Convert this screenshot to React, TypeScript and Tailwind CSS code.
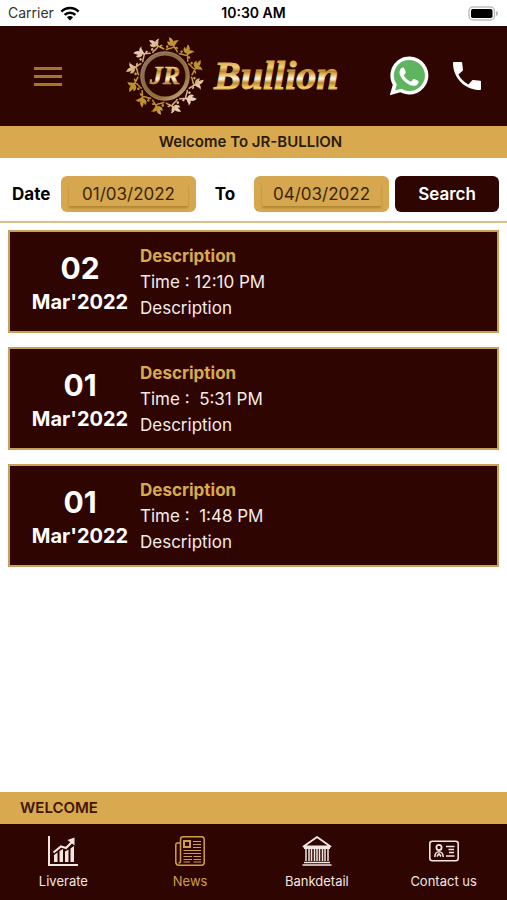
import { useState } from "react";

const NEWS = [
  { day: "02", month: "Mar'2022", title: "Description", time: "12:10 PM", body: "Description" },
  { day: "01", month: "Mar'2022", title: "Description", time: " 5:31 PM", body: "Description" },
  { day: "01", month: "Mar'2022", title: "Description", time: " 1:48 PM", body: "Description" },
];

const TABS = [
  { label: "Liverate", Icon: ChartIcon },
  { label: "News", Icon: NewsIcon },
  { label: "Bankdetail", Icon: BankIcon },
  { label: "Contact us", Icon: CardIcon },
];

function WifiIcon() {
  return (
    <svg width="20" height="15" viewBox="0 0 20 15" fill="none" stroke="#000" strokeWidth="2.5" aria-hidden>
      <path d="M1.4 5.6a12.2 12.2 0 0 1 17.2 0" />
      <path d="M4.6 8.9a7.6 7.6 0 0 1 10.8 0" />
      <path d="M10 14.4 6.9 11.2a4.4 4.4 0 0 1 6.2 0Z" fill="#000" stroke="none" />
    </svg>
  );
}

function BatteryIcon() {
  return (
    <svg width="31" height="15" viewBox="0 0 31 15" aria-hidden>
      <rect x="1" y="1" width="25.5" height="13" rx="4" fill="#fff" stroke="#c0c0c0" strokeWidth="1.5" />
      <rect x="3" y="3" width="21.5" height="9" rx="1.8" fill="#000" />
      <path d="M28.2 5v5c2.4-.6 2.4-4.4 0-5Z" fill="#b0b0b0" />
    </svg>
  );
}

function Logo() {
  return (
    <svg width="218" height="84" viewBox="0 0 218 84" role="img" aria-label="JR Bullion">
      <defs>
        <linearGradient id="ring" x1="10" y1="10" x2="74" y2="74" gradientUnits="userSpaceOnUse">
          <stop offset="0" stopColor="#f1e0da" />
          <stop offset="0.15" stopColor="#e0c3a0" />
          <stop offset="0.3" stopColor="#bf902f" />
          <stop offset="0.7" stopColor="#bf902f" />
          <stop offset="0.85" stopColor="#e6cbb0" />
          <stop offset="1" stopColor="#f3e2dc" />
        </linearGradient>
        <linearGradient id="band" x1="24" y1="20" x2="60" y2="64" gradientUnits="userSpaceOnUse">
          <stop offset="0" stopColor="#8d7562" />
          <stop offset="0.4" stopColor="#8a6a40" />
          <stop offset="0.75" stopColor="#94713a" />
          <stop offset="1" stopColor="#c9ab86" />
        </linearGradient>
        <linearGradient id="gold" x1="0" y1="28" x2="0" y2="57" gradientUnits="userSpaceOnUse">
          <stop offset="0" stopColor="#dca945" />
          <stop offset="0.18" stopColor="#f0cf7c" />
          <stop offset="0.32" stopColor="#bd8626" />
          <stop offset="0.46" stopColor="#e8c878" />
          <stop offset="0.58" stopColor="#fff6dc" />
          <stop offset="0.72" stopColor="#c08a2a" />
          <stop offset="0.88" stopColor="#f2cd6c" />
          <stop offset="1" stopColor="#c18b2c" />
        </linearGradient>
        <g id="leaf">
          <path
            d="M-6-25.500c2-3 6-2 7-5.500 .5-2.500-2.500-3-2.500-1M6-26c-1.500-3-6-3.500-6.500-7.500M5-29.500c-.6-1.800-2.800-.6-1.500.8"
            fill="none"
            strokeWidth="1.500"
          />
          <path d="M-2-30.500c-3.200 0-4.800-1.700-4.500-4.300 1 .8 1.600.9 2.400.6-1.200-1.200-1.300-2.700-2.300-4.300 2.900.1 4.800 1.100 5.700 3 1-1.700 2.700-2.400 5.200-2.200-1.700.9-1.800 2-2 3.100-.3 1.900-1.800 3.300-4.500 4.100Z" stroke="none" />
          <circle cx="-5.500" cy="-29" r="1.300" stroke="none" />
        </g>
      </defs>
      <mask id="wreath" maskUnits="userSpaceOnUse" x="0" y="0" width="84" height="84">
        <g fill="#fff" stroke="#fff">
          {[15, 45, 75, 105, 135, 165, 195, 225, 255, 285, 315, 345].map(angle => (
            <use key={angle} href="#leaf" transform={`translate(42 42) rotate(${angle})`} />
          ))}
        </g>
      </mask>
      <rect width="84" height="84" fill="url(#ring)" mask="url(#wreath)" />
      <circle cx="42" cy="42" r="22.500" fill="none" stroke="url(#band)" strokeWidth="4" />
      <circle cx="42" cy="42" r="24.300" fill="none" stroke="#b39370" strokeWidth="0.600" />
      <g fontWeight="700" fontStyle="italic" fontFamily="'Liberation Serif', serif" fill="url(#gold)" stroke="url(#gold)">
        <text x="42" y="50" fontSize="26" textAnchor="middle" strokeWidth="0.500">JR</text>
        <text x="91" y="55" fontSize="40" strokeWidth="1">Bullion</text>
      </g>
    </svg>
  );
}

function WhatsappIcon() {
  return (
    <svg width="40" height="40" viewBox="0 0 40 40" aria-hidden>
      <path d="M20.500.500a19 19 0 1 1-9.200 35.700L.8 39.300l3-10.500A19 19 0 0 1 20.500.500Z" fill="#fff" />
      <path d="M20.500 4a15.500 15.500 0 1 1-8.200 28.700L6 34.500l1.800-6A15.500 15.500 0 0 1 20.500 4Z" fill="#5fb45f" />
      <path d="M14 11.500c.8 0 1 .2 1.300.9l1.400 3.400c.2.600 0 1-.3 1.500l-1.200 1.500c-.3.400-.3.700 0 1.200 1.500 2.500 3.600 4.200 6.300 5.400.500.200.8.100 1.100-.2l1.500-1.900c.4-.500.8-.500 1.300-.3l3.500 1.700c.600.300.8.600.6 1.500-.4 2.500-2.600 3.700-4.900 3.600-3-.1-6.500-1.800-9.300-4.500-2.700-2.600-4.600-5.600-4.800-8.500-.1-2 .9-3.700 2-4.700.500-.4.900-.6 1.500-.6Z" fill="#fff" />
    </svg>
  );
}

function PhoneIcon() {
  return (
    <svg width="28" height="28" viewBox="3 3 18 18" fill="#fff" aria-hidden>
      <path d="M21 15.800v4.600a.6.6 0 0 1-.6.6C10.700 21 3 13.300 3 3.600A.6.6 0 0 1 3.600 3h4.700a.6.6 0 0 1 .6.600l.500 4.300a.8.8 0 0 1-.2.700L6.500 11.100c1.500 2.900 3.500 4.900 6.400 6.400l2.500-2.700a.8.800 0 0 1 .7-.2l4.300.5a.6.600 0 0 1 .6.700Z" />
    </svg>
  );
}

function ChartIcon() {
  return (
    <svg width="30" height="30" viewBox="0 0 30 30" fill="currentColor" aria-hidden>
      <path d="M0 0h2v28h28v2H0Z" />
      <path d="M6 19l3.500-2.500V26H6ZM11.500 15l3.500-2v13h-3.500ZM17 15.500l3.500-2V26H17ZM22.500 12.500l3.500-2.500v16h-3.500Z" />
      <path d="M5.500 16.500 13 10.500l5 1.500 6-6" fill="none" stroke="currentColor" strokeWidth="2.200" />
      <path d="m19.500 4 7-2.500v8Z" />
    </svg>
  );
}

function NewsIcon() {
  return (
    <svg width="30" height="30" viewBox="0 0 30 30" fill="none" stroke="currentColor" aria-hidden>
      <path d="M5.500 3.500A2.700 2.700 0 0 1 8.200.8h18.300a2.700 2.700 0 0 1 2.700 2.700v23a2.700 2.700 0 0 1-2.700 2.700H4A3.200 3.200 0 0 1 .8 26V8.500C.8 7.500 1.500 7 2.500 7h3M5.500 3.500V25a2 2 0 0 1-2 2" strokeWidth="1.500" />
      <rect x="9" y="5" width="6" height="6" strokeWidth="2" />
      <path d="M18 5.500h8M18 8.500h8M18 11.500h8M8.500 14.500H26M8.500 17.500H26M8.500 20.500H17M18.500 20.500H26M8.500 23.500H17M18.500 23.500H26M8.500 26H15M18.500 26H26" strokeWidth="1.100" />
    </svg>
  );
}

function BankIcon() {
  return (
    <svg width="30" height="30" viewBox="0 0 30 30" fill="none" stroke="currentColor" aria-hidden>
      <path d="M1.500 10.500 15 1l13.500 9.500Z" strokeWidth="1.800" strokeLinejoin="round" />
      <path d="M2 12h26" strokeWidth="2" />
      <path d="M4 13v12M7 13v12M9.500 13v12M12.500 13v12M15 13v12M17.500 13v12M20.500 13v12M23 13v12M26 13v12" strokeWidth="1.500" />
      <path d="M2 26.500h26M.5 29h29" strokeWidth="1.600" />
    </svg>
  );
}

function CardIcon() {
  return (
    <svg width="30" height="30" viewBox="0 0 30 30" fill="none" stroke="currentColor" aria-hidden>
      <rect x="0.800" y="5.300" width="28.400" height="19.500" rx="2.500" strokeWidth="1.600" />
      <circle cx="10" cy="11.500" r="2.600" strokeWidth="1.800" />
      <path d="M5.800 21c0-7 8.400-7 8.400 0M10 17.500l-2 3M10 17.500l2 3" strokeWidth="1.600" />
      <path d="M17 10.500h8.500M19.500 13.500H25M20 16.500h5M17 20h8.500" strokeWidth="1.400" />
    </svg>
  );
}

function DateField({ id, value, onChange }: { id: string; value: string; onChange: (value: string) => void }) {
  return (
    <div className="h-9 min-w-0 flex-1 rounded-md bg-[#d6a74e] px-2 pt-2">
      <input
        id={id}
        type="text"
        value={value}
        onChange={e => onChange(e.target.value)}
        className="block h-[22px] w-full text-center text-[17px] text-[#3a2606] shadow-[0_2px_2px_rgba(110,70,0,0.35)] outline-none"
      />
    </div>
  );
}

export default function App() {
  const [from, setFrom] = useState("01/03/2022");
  const [to, setTo] = useState("04/03/2022");
  const [tab, setTab] = useState("News");

  return (
    <div className="flex min-h-screen flex-col bg-white font-['Inter','Liberation_Sans',sans-serif]">
      {/* Status bar */}
      <div className="grid h-[26px] grid-cols-3 items-center px-2 text-sm">
        <div className="flex items-center gap-1.5 text-[#333]">
          Carrier
          <WifiIcon />
        </div>
        <div className="text-center font-semibold text-black">10:30 AM</div>
        <div className="flex justify-end">
          <BatteryIcon />
        </div>
      </div>

      <header className="flex h-[100px] items-center bg-[#2e0500] px-[26px]">
        <button type="button" aria-label="Menu" className="flex w-9 flex-col gap-[5px] pl-2">
          <span className="h-[3px] bg-[#a87524]" />
          <span className="h-[3px] bg-[#a87524]" />
          <span className="h-[3px] bg-[#a87524]" />
        </button>
        <div className="flex flex-1 justify-end">
          <Logo />
        </div>
        <div className="flex items-center gap-6 pl-12">
          <a href="#whatsapp" aria-label="WhatsApp"><WhatsappIcon /></a>
          <a href="#call" aria-label="Call"><PhoneIcon /></a>
        </div>
      </header>

      <h1 className="bg-[#d9a94f] py-1.5 pr-1.5 text-center text-[15px] leading-5 font-semibold text-[#2a1c0a]">
        Welcome To JR-BULLION
      </h1>

      {/* Date filter */}
      <form
        onSubmit={e => e.preventDefault()}
        className="flex h-[65px] items-center border-b-2 border-[#dcc08a] pt-2 pr-2 pl-3 text-[17px]"
      >
        <label htmlFor="from" className="w-[49px] pt-0.5 font-bold text-black">Date</label>
        <DateField id="from" value={from} onChange={setFrom} />
        <label htmlFor="to" className="w-[58px] pt-0.5 text-center font-bold text-black">To</label>
        <DateField id="to" value={to} onChange={setTo} />
        <button type="submit" className="ml-1.5 h-9 w-[104px] rounded-md bg-[#2e0500] pt-0.5 font-semibold text-white">
          Search
        </button>
      </form>

      <main className="flex flex-1 flex-col gap-3.5 px-2 pt-[7px] pb-4">
        {NEWS.map((item, i) => (
          <article key={i} className="flex min-h-[103px] items-center border-2 border-[#c9a05a] bg-[#2e0500] text-white">
            <div className="w-[130px] shrink-0 pt-1 pl-2.5 text-center font-bold">
              <p className="text-[30px] leading-9">{item.day}</p>
              <p className="text-xl leading-8">{item.month}</p>
            </div>
            <div className="text-[17px] leading-[26px] text-[#f5ebe8]">
              <h2 className="font-bold text-[#d9a94f]">{item.title}</h2>
              <p className="whitespace-pre">Time : {item.time}</p>
              <p>{item.body}</p>
            </div>
          </article>
        ))}
      </main>

      <div className="bg-[#d9a94f] px-5 py-1.5 text-[15px] leading-5 font-semibold text-[#421500]">WELCOME</div>

      <nav className="grid h-[76px] grid-cols-4 bg-[#2e0500]">
        {TABS.map(({ label, Icon }) => (
          <button
            key={label}
            type="button"
            onClick={() => setTab(label)}
            className={
              tab === label
                ? "flex flex-col items-center justify-center gap-1.5 pt-1 text-[13px] text-[#cf9f48]"
                : "flex flex-col items-center justify-center gap-1.5 pt-1 text-[13px] text-[#f3e6e2]"
            }
          >
            <Icon />
            {label}
          </button>
        ))}
      </nav>
    </div>
  );
}
